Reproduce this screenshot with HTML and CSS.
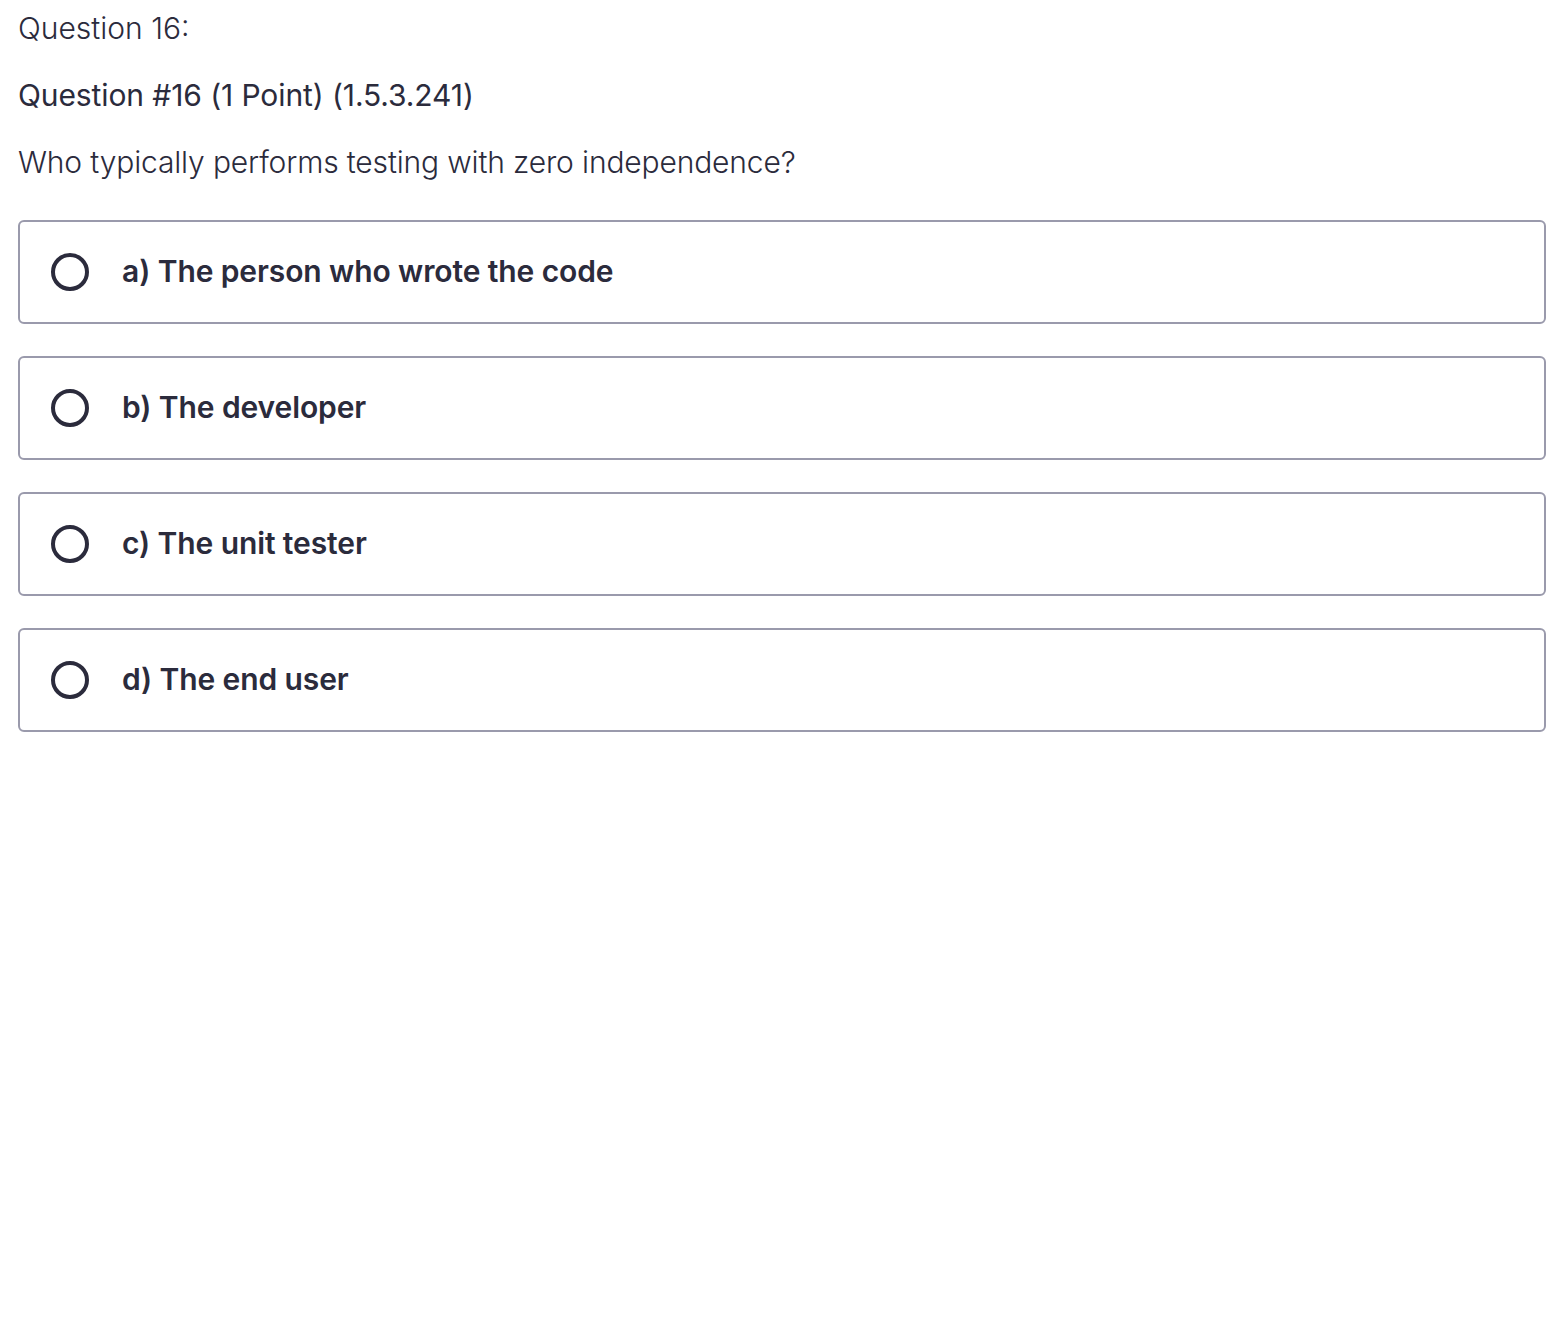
FILE: index.html
```html
<!DOCTYPE html>
<html lang="en">
<head>
<meta charset="utf-8">
<title>Question 16</title>
<link rel="stylesheet" href="styles.css">
</head>
<body>
<main class="page">
  <p class="q-label">Question 16:</p>
  <p class="q-title">Question #16 (1 Point) (1.5.3.241)</p>
  <p class="q-text">Who typically performs testing with zero independence?</p>
  <div class="options">
    <label class="option"><span class="radio"></span><span class="opt-text">a) The person who wrote the code</span></label>
    <label class="option"><span class="radio"></span><span class="opt-text">b) The developer</span></label>
    <label class="option"><span class="radio"></span><span class="opt-text">c) The unit tester</span></label>
    <label class="option"><span class="radio"></span><span class="opt-text">d) The end user</span></label>
  </div>
</main>
</body>
</html>
```
FILE: styles.css
```css
html, body {
  margin: 0;
  padding: 0;
  background: #ffffff;
}
body {
  font-family: Inter, "Noto Sans", sans-serif;
  color: #2b2b3c;
}
.page {
  padding: 8px 20px 0 18px;
}
.q-label {
  margin: 0;
  font-size: 30px;
  font-weight: 300;
  line-height: 40px;
}
.q-title {
  margin: 27px 0 0;
  font-size: 30px;
  font-weight: 400;
  line-height: 40px;
  letter-spacing: -0.1px;
}
.q-text {
  margin: 27px 0 0;
  font-size: 30px;
  font-weight: 300;
  line-height: 40px;
  letter-spacing: -0.15px;
}
.options {
  margin-top: 38px;
  display: flex;
  flex-direction: column;
  gap: 32px;
}
.option {
  display: flex;
  align-items: center;
  height: 104px;
  box-sizing: border-box;
  border: 2px solid #9a9aac;
  border-radius: 6px;
  padding-left: 31px;
}
.radio {
  width: 38px;
  height: 38px;
  box-sizing: border-box;
  border: 4px solid #2b2b3c;
  border-radius: 50%;
  flex: none;
}
.opt-text {
  margin-left: 33px;
  font-size: 30px;
  font-weight: 600;
  letter-spacing: -0.1px;
  line-height: 38px;
  padding-bottom: 2px;
}
```
